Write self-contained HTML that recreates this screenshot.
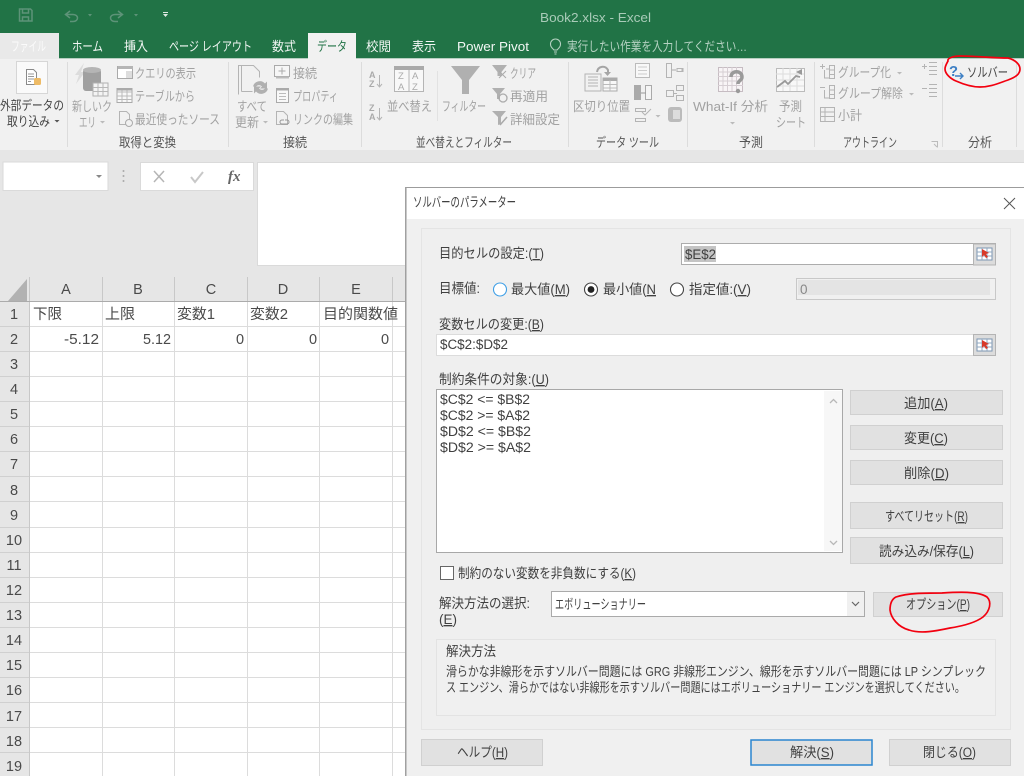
<!DOCTYPE html>
<html lang="ja"><head><meta charset="utf-8"><title>Book2.xlsx - Excel</title>
<style>
html,body{margin:0;padding:0;width:1024px;height:776px;overflow:hidden;background:#e6e6e6}
svg{display:block;position:absolute;left:0;top:0;filter:blur(.3px)}
text{font-family:"Liberation Sans","Noto Sans CJK JP",sans-serif;white-space:pre}
.r{font-size:13px;fill:#a2a2a2}
.tab{font-size:13px;fill:#f2f7f4}
.c{font-size:14.5px;fill:#4a4a4a}
.d{font-size:13.5px;fill:#404040}
.u{text-decoration:underline}
.ic{fill:none;stroke:#b4b4b4;stroke-width:1}
.g{fill:#b0b0b0}
.btn{fill:#e1e1e1;stroke:#d0d0d0;stroke-width:1}
</style></head><body>
<svg width="1024" height="776" viewBox="0 0 1024 776" xmlns="http://www.w3.org/2000/svg">
<!-- title bar -->
<rect width="1024" height="59" fill="#217346"/>
<rect x="0" y="33" width="59" height="26" fill="#e9e9e9"/>
<rect x="308" y="33" width="48" height="26" fill="#f1f1f1"/>
<g fill="none" stroke="#5d9378" stroke-width="1.5">
<path d="M19.500 9h11l1.500 1.500v10.500h-12.500z"/><path d="M22.500 9v4h6v-4M22.500 21v-4h6v4"/>
<path d="M70 11l-4.500 3.500 4.500 3.500M66 14.500h7c6 0 6 7 0 7h-3"/>
<path d="M118 11l4.500 3.500-4.500 3.500M122 14.500h-7c-6 0-6 7 0 7h3"/>
</g>
<path d="M88 14h4l-2 2.500zM134 14h4l-2 2.500z" fill="#5d9378"/>
<path d="M163 12h5v1h-5zM163 14h5l-2.500 3z" fill="#dfe9e3"/>
<text x="540" y="22" font-size="13" fill="#a9cbb8" textLength="111" lengthAdjust="spacingAndGlyphs">Book2.xlsx - Excel</text>
<text x="11" y="51" class="tab" style="fill:#fbfbfb" textLength="35" lengthAdjust="spacingAndGlyphs">ファイル</text>
<text x="72" y="51" class="tab" textLength="31" lengthAdjust="spacingAndGlyphs">ホーム</text>
<text x="124" y="51" class="tab" textLength="24" lengthAdjust="spacingAndGlyphs">挿入</text>
<text x="169" y="51" class="tab" textLength="83" lengthAdjust="spacingAndGlyphs">ページ レイアウト</text>
<text x="272" y="51" class="tab" textLength="24" lengthAdjust="spacingAndGlyphs">数式</text>
<text x="317" y="51" class="tab" style="fill:#217346" textLength="30" lengthAdjust="spacingAndGlyphs">データ</text>
<text x="366" y="51" class="tab" textLength="25" lengthAdjust="spacingAndGlyphs">校閲</text>
<text x="412" y="51" class="tab" textLength="24" lengthAdjust="spacingAndGlyphs">表示</text>
<text x="457" y="51" class="tab" textLength="72" lengthAdjust="spacingAndGlyphs">Power Pivot</text>
<g fill="none" stroke="#b5d2c2" stroke-width="1.100"><path d="M554 50c-3-3-3.500-4-3.500-6a5 5 0 0 1 10 0c0 2-.5 3-3.500 6zM554 52h3M554.500 54h2"/></g>
<text x="567" y="51" class="tab" style="fill:#b5d2c2" textLength="180" lengthAdjust="spacingAndGlyphs">実行したい作業を入力してください…</text>

<!-- ribbon -->
<rect x="0" y="59" width="1024" height="91" fill="#f1f1f1"/>
<rect x="59" y="58" width="249" height="1" fill="#b7cfc1"/><rect x="356" y="58" width="668" height="1" fill="#b7cfc1"/>
<path d="M67.500 62v85M228.500 62v85M361.500 62v85M568.500 62v85M687.500 62v85M814.500 62v85M942.500 62v85M1016.500 62v85" stroke="#dcdcdc"/>
<!-- external data -->
<rect x="16.500" y="61.500" width="31" height="32" fill="#fafafa" stroke="#d6d6d6"/>
<path d="M26.500 69.500h7l3 3v12h-10z" fill="#fff" stroke="#8a8a8a"/><path d="M28 74h6M28 76.500h6M28 79h6M28 81.500h3" stroke="#999"/>
<rect x="34" y="78" width="7" height="7" rx="1.500" fill="#eebb66"/>
<text x="0" y="110" class="r" style="fill:#444" textLength="64" lengthAdjust="spacingAndGlyphs">外部データの</text>
<text x="7" y="126" class="r" style="fill:#444" textLength="43" lengthAdjust="spacingAndGlyphs">取り込み</text>
<path d="M54.500 120h5l-2.500 2.500z" fill="#555"/>
<!-- new query -->
<path d="M84 63l-9 12h4l-3 9 9-12h-4z" fill="#dcdcdc"/>
<rect x="83" y="69" width="18" height="22" rx="3" fill="#a0a0a0"/><ellipse cx="92" cy="70" rx="9" ry="3" fill="#b5b5b5"/>
<rect x="93" y="83" width="15" height="13" fill="#f4f4f4" stroke="#b0b0b0"/><path d="M93 87.500h15M93 91.500h15M98 83v13M103 83v13" stroke="#b8b8b8"/>
<text x="72" y="111" class="r" textLength="40" lengthAdjust="spacingAndGlyphs">新しいク</text>
<text x="79" y="127" class="r" textLength="17" lengthAdjust="spacingAndGlyphs">エリ</text>
<path d="M100 121h5l-2.500 2.500z" fill="#bbb"/>
<rect x="117.500" y="66.500" width="15" height="12" fill="#fff" stroke="#aaa"/><rect x="118" y="66" width="15" height="3" fill="#b5b5b5"/><rect x="126" y="71" width="6" height="7" fill="#ddd"/>
<text x="135" y="78" class="r" textLength="61" lengthAdjust="spacingAndGlyphs">クエリの表示</text>
<rect x="117" y="88.500" width="15" height="14" fill="#f8f8f8" stroke="#aaa"/><path d="M117 92h15M117 96h15M117 99.500h15M122 88v14M127 88v14" stroke="#bbb"/><rect x="117" y="88" width="15" height="2.500" fill="#aaa"/>
<text x="135" y="101" class="r" textLength="60" lengthAdjust="spacingAndGlyphs">テーブルから</text>
<path d="M119.500 111.500h7l3 3v10h-10z" class="ic"/><circle cx="129" cy="123" r="3.500" fill="#f1f1f1" stroke="#aaa"/>
<text x="135" y="124" class="r" textLength="85" lengthAdjust="spacingAndGlyphs">最近使ったソース</text>
<text x="119" y="147" class="r" style="fill:#555" textLength="57" lengthAdjust="spacingAndGlyphs">取得と変換</text>
<!-- connections -->
<path d="M238.500 94.500v-29h9M241.500 91.500v-26h12l6 6v6M241.500 91.500h11" class="ic"/>
<path d="M253 87a7 7 0 0 1 12-3l2-2v7h-7l2-2a4 4 0 0 0-6 0zM268 89a7 7 0 0 1-12 3l-2 2v-7h7l-2 2a4 4 0 0 0 6 0z" transform="translate(0 -.5)" fill="#b0b0b0"/>
<text x="237" y="111" class="r" textLength="30" lengthAdjust="spacingAndGlyphs">すべて</text>
<text x="235" y="127" class="r" textLength="24" lengthAdjust="spacingAndGlyphs">更新</text>
<path d="M263 121h5l-2.500 2.500z" fill="#bbb"/>
<rect x="274.500" y="65.500" width="15" height="11" fill="#f6f6f6" stroke="#aaa"/><path d="M282 67.500v7M278.500 71h7" stroke="#aaa"/><path d="M276 77.500h13" stroke="#bbb" stroke-width="2"/>
<text x="293" y="78" class="r" textLength="24" lengthAdjust="spacingAndGlyphs">接続</text>
<rect x="276.500" y="88.500" width="12" height="14" fill="#f8f8f8" stroke="#aaa"/><rect x="276" y="88" width="13" height="2.500" fill="#aaa"/><path d="M279 93.500h7M279 96.500h7M279 99.500h7" stroke="#bbb"/>
<text x="293" y="101" class="r" textLength="45" lengthAdjust="spacingAndGlyphs">プロパティ</text>
<path d="M276.500 111.500h7l4 4v9h-11z" class="ic"/><path d="M282 124a2 2 0 0 1 0-4h2m0 4h-2m3-4h2a2 2 0 0 1 0 4h-3" stroke="#999" fill="none"/>
<text x="293" y="124" class="r" textLength="60" lengthAdjust="spacingAndGlyphs">リンクの編集</text>
<text x="283" y="147" class="r" style="fill:#555" textLength="24" lengthAdjust="spacingAndGlyphs">接続</text>
<!-- sort -->
<text x="369" y="78" font-size="9" font-weight="bold" fill="#aaa">A</text><text x="369" y="87" font-size="9" font-weight="bold" fill="#aaa">Z</text><path d="M379.500 75v11m-2.500-2l2.500 3 2.500-3" class="ic"/>
<text x="369" y="111" font-size="9" font-weight="bold" fill="#aaa">Z</text><text x="369" y="120" font-size="9" font-weight="bold" fill="#aaa">A</text><path d="M379.500 108v11m-2.500-2l2.500 3 2.500-3" class="ic"/>
<rect x="394.500" y="66.500" width="29" height="25" fill="#f8f8f8" stroke="#b5b5b5"/><rect x="394" y="66" width="30" height="4" fill="#aaa"/><path d="M409 70v21" stroke="#b5b5b5"/>
<text x="398" y="79" font-size="9.500" fill="#aaa">Z</text><text x="398" y="90" font-size="9.500" fill="#aaa">A</text><text x="412" y="79" font-size="9.500" fill="#aaa">A</text><text x="412" y="90" font-size="9.500" fill="#aaa">Z</text>
<text x="387" y="111" class="r" textLength="45" lengthAdjust="spacingAndGlyphs">並べ替え</text>
<path d="M437.500 71v50" stroke="#e2e2e2"/>
<path d="M451 66h29l-11 14v14h-7v-14z" class="g"/>
<text x="442" y="111" class="r" textLength="44" lengthAdjust="spacingAndGlyphs">フィルター</text>
<path d="M492 65h15l-5.500 7v4h-4v-4z" class="g"/><path d="M499 71l7 7m0-7l-7 7" stroke="#aaa" fill="none"/>
<text x="510" y="78" class="r" textLength="26" lengthAdjust="spacingAndGlyphs">クリア</text>
<path d="M492 88h13l-5 6v5h-3v-5z" class="g"/><circle cx="503" cy="98" r="4" fill="none" stroke="#aaa" stroke-width="1.300"/>
<text x="510" y="101" class="r" textLength="38" lengthAdjust="spacingAndGlyphs">再適用</text>
<path d="M492 111h14l-5 6v7l-3 1v-8z" class="g"/><path d="M500 125l7-8" stroke="#aaa" stroke-width="1.500"/>
<text x="510" y="124" class="r" textLength="50" lengthAdjust="spacingAndGlyphs">詳細設定</text>
<text x="416" y="147" class="r" style="fill:#555" textLength="96" lengthAdjust="spacingAndGlyphs">並べ替えとフィルター</text>
<!-- data tools -->
<path d="M585 74h16v17h-16zM588 77h10M588 80h10M588 83h10M588 86h10" class="ic"/>
<rect x="603" y="78" width="14" height="13" fill="#f8f8f8" stroke="#aaa"/><rect x="603" y="78" width="14" height="3" fill="#aaa"/><path d="M603 84.500h14M603 88h14M610 80v11" stroke="#bbb"/>
<path d="M597 72c1-6 8-7 11-2l0 3" fill="none" stroke="#a5a5a5" stroke-width="2"/><path d="M604 72h7l-3.500 4z" fill="#a5a5a5"/>
<text x="573" y="111" class="r" textLength="57" lengthAdjust="spacingAndGlyphs">区切り位置</text>
<rect x="635.500" y="63.500" width="14" height="14" fill="#f8f8f8" stroke="#bbb"/><path d="M638 67h9M638 70.500h9M638 74h9" stroke="#ccc"/>
<rect x="634" y="85" width="7" height="15" fill="#aaa"/><rect x="645.500" y="85.500" width="6" height="14" fill="#f5f5f5" stroke="#aaa"/><path d="M641 93h5" stroke="#999"/>
<path d="M635.500 108.500h10v3h-10zM635.500 118.500h10v3h-10z" class="ic"/><path d="M642 112l3 3 6-6" class="ic"/>
<path d="M655.500 115h5l-2.500 2.500z" fill="#bbb"/>
<path d="M666.500 63.500v14h5v-14zM677 68.500h5v3h-5zM680 68.500h3v3h-3" class="ic"/><path d="M672 70h4" stroke="#aaa"/>
<path d="M666.500 90.500h7v6h-7zM676.500 85.500h7v5h-7zM676.500 95.500h7v5h-7zM673 93.500h4" class="ic"/>
<rect x="668" y="107" width="14" height="15" rx="3" fill="#bbb"/><path d="M673 110h7v9h-7z" fill="#ddd"/>
<text x="596" y="147" class="r" style="fill:#555" textLength="63" lengthAdjust="spacingAndGlyphs">データ ツール</text>
<!-- forecast -->
<rect x="718.500" y="67.500" width="24" height="24" fill="#f8f4f6" stroke="#c6bcc2"/><path d="M723 67v24M727.500 67v24M732 67v24M736.500 67v24M718 72h25M718 76.500h25M718 81h25M718 85.500h25" stroke="#d6ced3"/>
<path d="M731 77c0-7 11-7 11 0 0 4-4 3-4 7" fill="none" stroke="#9a9a9a" stroke-width="3.500"/><circle cx="738" cy="91" r="2.200" fill="#9a9a9a"/>
<text x="693" y="111" class="r" textLength="75" lengthAdjust="spacingAndGlyphs">What-If 分析</text>
<path d="M730 122h5l-2.500 2.500z" fill="#bbb"/>
<rect x="776.500" y="68.500" width="28" height="23" fill="#f8f8f8" stroke="#bbb"/><path d="M783 68v23M790 68v23M797 68v23M776 74h28M776 80h28M776 86h28" stroke="#ddd"/>
<path d="M777 87l8-6 3 3 8-8 4 1" fill="none" stroke="#999" stroke-width="1.800"/><path d="M796 72l6-3v6z" fill="#999"/>
<text x="779" y="111" class="r" textLength="23" lengthAdjust="spacingAndGlyphs">予測</text>
<text x="776" y="127" class="r" textLength="30" lengthAdjust="spacingAndGlyphs">シート</text>
<text x="739" y="147" class="r" style="fill:#555" textLength="24" lengthAdjust="spacingAndGlyphs">予測</text>
<!-- outline -->
<g class="ic">
<path d="M820 66.500h5M822.500 64v5M826 69h3M829.500 65.500h5v13h-5zM829.500 70h5M829.500 74.500h5"/><path d="M824.500 70v8h5"/>
<path d="M820 87.500h5M829.500 85.500h5v13h-5zM829.500 90h5M829.500 94.500h5M824.500 90v8h5"/>
<path d="M820.500 107.500h14v14h-14zM820.500 112h14M820.500 116.500h14M825 107.500v14"/>
<path d="M922 66.500h5M924.500 64v5M929 62.500h8M929 66.500h8M929 70.500h8M929 74.500h8"/>
<path d="M922 88.500h5M929 84.500h8M929 88.500h8M929 92.500h8M929 96.500h8"/>
</g>
<text x="838" y="77" class="r" textLength="53" lengthAdjust="spacingAndGlyphs">グループ化</text>
<path d="M897 72h5l-2.500 2.500z" fill="#bbb"/>
<text x="838" y="98" class="r" textLength="65" lengthAdjust="spacingAndGlyphs">グループ解除</text>
<path d="M909 93h5l-2.500 2.500z" fill="#bbb"/>
<text x="838" y="120" class="r" textLength="24" lengthAdjust="spacingAndGlyphs">小計</text>
<text x="843" y="147" class="r" style="fill:#555" textLength="54" lengthAdjust="spacingAndGlyphs">アウトライン</text>
<path d="M931.500 141.500h6v6M934 144l3 3" stroke="#bbb" fill="none"/>
<!-- solver -->
<text x="949" y="76" font-size="15" font-weight="bold" fill="#3d7fc4" textLength="9" lengthAdjust="spacingAndGlyphs">?</text>
<path d="M955 76h8m-3-3l3 3-3 3" fill="none" stroke="#3d7fc4" stroke-width="1.400"/>
<text x="967" y="77" class="r" style="fill:#444" textLength="41" lengthAdjust="spacingAndGlyphs">ソルバー</text>
<text x="968" y="147" class="r" style="fill:#555" textLength="24" lengthAdjust="spacingAndGlyphs">分析</text>
<!-- red oval solver -->
<path d="M948 61c-1-3 6-5 12-5 14 0 34 2 48 2 8 2 12 7 12 11 0 5-4 8-12 11-9 3-17 7-28 7-8 0-15-2-24-6-5-2-11-7-11-12 0-3 2-6 3-8z" fill="none" stroke="#f2000f" stroke-width="1.700"/>

<!-- formula bar -->
<rect x="3" y="162" width="105" height="28.500" fill="#fff" stroke="#dadada"/>
<path d="M96 175h6l-3 3z" fill="#888"/>
<circle cx="123.500" cy="171" r="1" fill="#aaa"/><circle cx="123.500" cy="176" r="1" fill="#aaa"/><circle cx="123.500" cy="181" r="1" fill="#aaa"/>
<rect x="140.500" y="162.500" width="113" height="28" fill="#fff" stroke="#dadada"/>
<path d="M154 171l10 11m0-11l-10 11" stroke="#b5b5b5" stroke-width="1.500" fill="none"/>
<path d="M191 177l4 5 8-10" stroke="#c8c8c8" stroke-width="2" fill="none"/>
<text x="228" y="181" style="font-family:'Liberation Serif',serif;font-style:italic;font-weight:bold" font-size="15" fill="#666">fx</text>
<rect x="257.500" y="162.500" width="767" height="103" fill="#fff" stroke="#dadada"/>

<!-- sheet -->
<rect x="0" y="277" width="406" height="25" fill="#e6e6e6"/>
<rect x="0" y="302" width="29" height="474" fill="#e6e6e6"/>
<rect x="30" y="302" width="376" height="474" fill="#fff"/>
<path d="M27 279v22H8z" fill="#b2b2b2"/>
<path d="M29.500 277v499M102.500 277v24M174.500 277v24M247.500 277v24M319.500 277v24M392.500 277v24" stroke="#c8c8c8"/>
<path d="M0 301.500h406" stroke="#ababab"/>
<path d="M102.500 302v474M174.500 302v474M247.500 302v474M319.500 302v474M392.500 302v474" stroke="#dcdcdc"/>
<path d="M30 326.500h376M30 351.500h376M30 376.500h376M30 401.500h376M30 426.500h376M30 451.500h376M30 476.500h376M30 501.500h376M30 527.500h376M30 552.500h376M30 577.500h376M30 602.500h376M30 627.500h376M30 652.500h376M30 677.500h376M30 702.500h376M30 727.500h376M30 752.500h376" stroke="#dcdcdc"/>
<path d="M0 326.500h29M0 351.500h29M0 376.500h29M0 401.500h29M0 426.500h29M0 451.500h29M0 476.500h29M0 501.500h29M0 527.500h29M0 552.500h29M0 577.500h29M0 602.500h29M0 627.500h29M0 652.500h29M0 677.500h29M0 702.500h29M0 727.500h29M0 752.500h29" stroke="#d0d0d0"/>
<g class="c" text-anchor="middle">
<text x="66" y="294" class="c">A</text><text x="138" y="294" class="c">B</text><text x="211" y="294" class="c">C</text><text x="283" y="294" class="c">D</text><text x="356" y="294" class="c">E</text>
<text x="14" y="319" class="c">1</text><text x="14" y="344" class="c">2</text><text x="14" y="369" class="c">3</text><text x="14" y="394" class="c">4</text><text x="14" y="419" class="c">5</text><text x="14" y="444" class="c">6</text><text x="14" y="469" class="c">7</text><text x="14" y="495" class="c">8</text><text x="14" y="520" class="c">9</text>
<text x="14" y="545" class="c">10</text><text x="14" y="570" class="c">11</text><text x="14" y="595" class="c">12</text><text x="14" y="620" class="c">13</text><text x="14" y="645" class="c">14</text><text x="14" y="670" class="c">15</text><text x="14" y="695" class="c">16</text><text x="14" y="721" class="c">17</text><text x="14" y="746" class="c">18</text><text x="14" y="771" class="c">19</text>
</g>
<text x="33" y="319" class="c" textLength="29" lengthAdjust="spacingAndGlyphs">下限</text>
<text x="105" y="319" class="c" textLength="30" lengthAdjust="spacingAndGlyphs">上限</text>
<text x="177" y="319" class="c" textLength="38" lengthAdjust="spacingAndGlyphs">変数1</text>
<text x="250" y="319" class="c" textLength="38" lengthAdjust="spacingAndGlyphs">変数2</text>
<text x="323" y="319" class="c" textLength="75" lengthAdjust="spacingAndGlyphs">目的関数値</text>
<text x="64" y="344" class="c" textLength="35" lengthAdjust="spacingAndGlyphs">-5.12</text>
<text x="143" y="344" class="c" textLength="28" lengthAdjust="spacingAndGlyphs">5.12</text>
<text x="236" y="344" class="c">0</text><text x="309" y="344" class="c">0</text><text x="381" y="344" class="c">0</text>

<!-- dialog -->
<rect x="405" y="187" width="619" height="589" fill="#f0f0f0"/>
<rect x="405" y="187" width="619" height="1" fill="#9c9c9c"/>
<rect x="405" y="187" width="1.500" height="589" fill="#a0a0a0"/>
<rect x="407" y="188" width="617" height="31" fill="#fff"/>
<text x="413" y="207" class="d" textLength="103" lengthAdjust="spacingAndGlyphs">ソルバーのパラメーター</text>
<path d="M1004 198l11 11m0-11l-11 11" stroke="#555" fill="none"/>
<rect x="421.500" y="228.500" width="589" height="501" fill="#efefef" stroke="#e4e4e4"/>

<text x="439" y="258" class="d" textLength="105" lengthAdjust="spacingAndGlyphs">目的セルの設定:(<tspan class="u">T</tspan>)</text>
<rect x="681.500" y="243.500" width="314" height="21" fill="#fff" stroke="#acacac"/>
<rect x="684" y="246" width="32" height="16" fill="#c4c4c4"/>
<text x="685" y="259" class="d" textLength="31" lengthAdjust="spacingAndGlyphs">$E$2</text>
<rect x="973.500" y="244" width="22" height="21" fill="#dcdcdc" stroke="#b4b4b4"/>
<rect x="977" y="248" width="15" height="12" fill="#fff" stroke="#7c96b2"/><path d="M977 252h15M977 256h15M982 248v12M987 248v12" stroke="#90a8c0"/><path d="M982 249l7 4-3 1 2 3-2 1-2-3-2 2z" fill="#d83a2a"/>

<text x="439" y="293" class="d" textLength="41" lengthAdjust="spacingAndGlyphs">目標値:</text>
<circle cx="500" cy="289.500" r="6.500" fill="#fff" stroke="#3f9fe6" stroke-width="1.100"/>
<text x="511" y="294" class="d" textLength="59" lengthAdjust="spacingAndGlyphs">最大値(<tspan class="u">M</tspan>)</text>
<circle cx="591" cy="289.500" r="6.500" fill="#fff" stroke="#444" stroke-width="1.100"/><circle cx="591" cy="289.500" r="3.400" fill="#222"/>
<text x="603" y="294" class="d" textLength="53" lengthAdjust="spacingAndGlyphs">最小値(<tspan class="u">N</tspan></text>
<circle cx="677" cy="289.500" r="6.500" fill="#fff" stroke="#444" stroke-width="1.100"/>
<text x="689" y="294" class="d" textLength="62" lengthAdjust="spacingAndGlyphs">指定値:(<tspan class="u">V</tspan>)</text>
<rect x="796.500" y="278.500" width="199" height="21" fill="#f0f0f0" stroke="#c8c8c8"/>
<rect x="798" y="280" width="192" height="15" fill="#e4e4e4"/>
<text x="800" y="294" class="d" style="fill:#888">0</text>

<text x="439" y="329" class="d" textLength="105" lengthAdjust="spacingAndGlyphs">変数セルの変更:(<tspan class="u">B</tspan>)</text>
<rect x="436.500" y="334.500" width="559" height="21" fill="#fff" stroke="#dcdcdc"/>
<text x="440" y="349" class="d" textLength="68" lengthAdjust="spacingAndGlyphs">$C$2:$D$2</text>
<rect x="973.500" y="334.500" width="22" height="21" fill="#dcdcdc" stroke="#b4b4b4"/>
<rect x="977" y="339" width="15" height="12" fill="#fff" stroke="#7c96b2"/><path d="M977 343h15M977 347h15M982 339v12M987 339v12" stroke="#90a8c0"/><path d="M982 340l7 4-3 1 2 3-2 1-2-3-2 2z" fill="#d83a2a"/>

<text x="439" y="384" class="d" textLength="110" lengthAdjust="spacingAndGlyphs">制約条件の対象:(<tspan class="u">U</tspan>)</text>
<rect x="436.500" y="389.500" width="406" height="163" fill="#fff" stroke="#a8a8a8"/>
<rect x="824" y="391" width="18" height="160" fill="#f7f7f7"/>
<path d="M830 403l3.500-3.500 3.500 3.500M830 541l3.500 3.500 3.500-3.500" fill="none" stroke="#b8b8b8" stroke-width="1.300"/>
<text x="440" y="404" class="d" textLength="90" lengthAdjust="spacingAndGlyphs">$C$2 &lt;= $B$2</text>
<text x="440" y="420" class="d" textLength="90" lengthAdjust="spacingAndGlyphs">$C$2 &gt;= $A$2</text>
<text x="440" y="436" class="d" textLength="91" lengthAdjust="spacingAndGlyphs">$D$2 &lt;= $B$2</text>
<text x="440" y="452" class="d" textLength="91" lengthAdjust="spacingAndGlyphs">$D$2 &gt;= $A$2</text>

<rect x="850.500" y="390.500" width="152" height="24" class="btn"/>
<text x="904" y="408" class="d" textLength="44" lengthAdjust="spacingAndGlyphs">追加(<tspan class="u">A</tspan>)</text>
<rect x="850.500" y="425.500" width="152" height="24" class="btn"/>
<text x="904" y="443" class="d" textLength="44" lengthAdjust="spacingAndGlyphs">変更(<tspan class="u">C</tspan>)</text>
<rect x="850.500" y="460.500" width="152" height="24" class="btn"/>
<text x="904" y="478" class="d" textLength="45" lengthAdjust="spacingAndGlyphs">削除(<tspan class="u">D</tspan>)</text>
<rect x="850.500" y="502.500" width="152" height="26" class="btn"/>
<text x="885" y="521" class="d" textLength="83" lengthAdjust="spacingAndGlyphs">すべてリセット(<tspan class="u">R</tspan>)</text>
<rect x="850.500" y="537.500" width="152" height="26" class="btn"/>
<text x="879" y="556" class="d" textLength="95" lengthAdjust="spacingAndGlyphs">読み込み/保存(<tspan class="u">L</tspan>)</text>

<rect x="440.500" y="566.500" width="13" height="13" fill="#fff" stroke="#666"/>
<text x="458" y="578" class="d" textLength="178" lengthAdjust="spacingAndGlyphs">制約のない変数を非負数にする(<tspan class="u">K</tspan>)</text>

<text x="439" y="608" class="d" textLength="91" lengthAdjust="spacingAndGlyphs">解決方法の選択:</text>
<text x="439" y="624" class="d" textLength="18" lengthAdjust="spacingAndGlyphs">(<tspan class="u">E</tspan>)</text>
<rect x="551.500" y="591.500" width="313" height="25" fill="#fff" stroke="#aaa"/>
<rect x="847" y="592" width="17" height="24" fill="#f0f0f0"/><path d="M852 602l3.500 3.500 3.500-3.500" fill="none" stroke="#666" stroke-width="1.200"/>
<text x="555" y="609" class="d" textLength="91" lengthAdjust="spacingAndGlyphs">エボリューショナリー</text>
<rect x="873.500" y="592.500" width="129" height="24" class="btn"/>
<text x="906" y="609" class="d" textLength="64" lengthAdjust="spacingAndGlyphs">オプション(<tspan class="u">P</tspan>)</text>
<path d="M896 597c12-4 28-4 46-4 16-1 36-2 45 4 5 5 3 14-4 20-8 6-20 9-33 11-14 3-29 6-41 2-11-3-18-12-19-20 0-6 2-11 6-13z" fill="none" stroke="#f2000f" stroke-width="1.700"/>

<rect x="436.500" y="639.500" width="559" height="76" fill="#f0f0f0" stroke="#e3e3e3"/>
<text x="446" y="656" class="d" textLength="50" lengthAdjust="spacingAndGlyphs">解決方法</text>
<text x="446" y="676" class="d" style="font-size:13px" textLength="540" lengthAdjust="spacingAndGlyphs">滑らかな非線形を示すソルバー問題には GRG 非線形エンジン、線形を示すソルバー問題には LP シンプレック</text>
<text x="446" y="692" class="d" style="font-size:13px" textLength="519" lengthAdjust="spacingAndGlyphs">ス エンジン、滑らかではない非線形を示すソルバー問題にはエボリューショナリー エンジンを選択してください。</text>

<rect x="421.500" y="739.500" width="121" height="26" class="btn"/>
<text x="457" y="757" class="d" textLength="51" lengthAdjust="spacingAndGlyphs">ヘルプ(<tspan class="u">H</tspan>)</text>
<rect x="751" y="740" width="121" height="25" fill="#e1e1e1" stroke="#2a86d0" stroke-width="1.500"/>
<text x="790" y="757" class="d" textLength="44" lengthAdjust="spacingAndGlyphs">解決(<tspan class="u">S</tspan>)</text>
<rect x="889.500" y="739.500" width="121" height="26" class="btn"/>
<text x="923" y="757" class="d" textLength="53" lengthAdjust="spacingAndGlyphs">閉じる(<tspan class="u">O</tspan>)</text>
</svg>
</body></html>
